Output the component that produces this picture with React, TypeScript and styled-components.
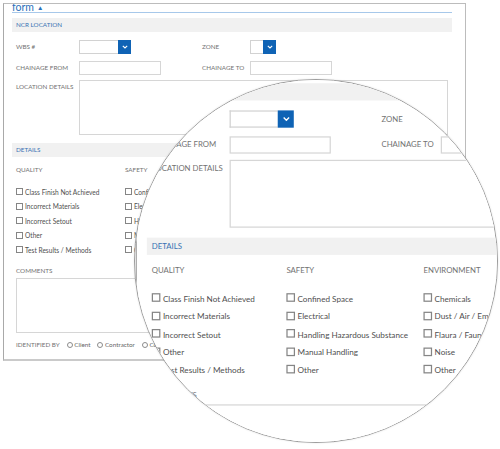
import React from "react";
import styled, { createGlobalStyle } from "styled-components";

const GlobalStyle = createGlobalStyle`
  html, body { margin: 0; padding: 0; background: #fff; }
  body { font-family: Lato, "Open Sans", "Liberation Sans", sans-serif; }
  * { box-sizing: border-box; }
`;

const Stage = styled.div`
  position: relative;
  width: 500px;
  height: 449px;
  overflow: hidden;
  background: #fff;
`;

const Sheet = styled.div`
  width: 500px;
  padding: 3px 0 0 3px;
`;

const Panel = styled.section`
  width: 463px;
  height: 358px;
  border: 1px solid #bcbcbc;
  border-left-color: #a9a9a9;
  border-bottom: 2px solid #cacaca;
  padding: 0 13px 0 8px;
  display: flex;
  flex-direction: column;
  overflow: hidden;
  background: #fff;
`;

const TitleBar = styled.div`
  height: 8.5px;
  overflow: hidden;
  border-bottom: 1.5px solid #a7c8ea;
`;

const Title = styled.div`
  margin-top: -3.5px;
  font-size: 10.5px;
  line-height: 10px;
  color: #2b6fba;
  display: flex;
  align-items: center;
  gap: 3px;
`;

const Caret = styled.span`
  font-size: 6.5px;
  line-height: 10px;
  padding-top: 2px;
  color: #2b6fba;
`;

const Band = styled.div<{ $mt: number }>`
  margin-top: ${(p) => p.$mt}px;
  height: 14.5px;
  background: #f1f1f1;
  padding-left: 4px;
  display: flex;
  align-items: center;
  font-size: 6.3px;
  color: #3871b3;
  text-transform: uppercase;
`;

const FieldRow = styled.div<{ $mt: number; $h: number; $top?: boolean }>`
  margin-top: ${(p) => p.$mt}px;
  height: ${(p) => p.$h}px;
  display: grid;
  grid-template-columns: 67px 123px 48px 1fr;
  align-items: ${(p) => (p.$top ? "start" : "center")};
`;

const Label = styled.span<{ $pt?: number }>`
  padding-left: 4px;
  padding-top: ${(p) => p.$pt ?? 0}px;
  font-size: 6.3px;
  color: #727272;
  text-transform: uppercase;
  white-space: nowrap;
`;

const Label2 = styled(Label)`
  padding-left: 0;
`;

const SelectBox = styled.div<{ $w: number }>`
  display: flex;
  height: 14px;
  width: ${(p) => p.$w + 13}px;
`;

const SelectField = styled.div`
  flex: 1;
  border: 1px solid #d2d2d2;
  border-right: none;
  background: #fff;
`;

const SelectButton = styled.div`
  width: 13px;
  background: #0f63b5;
  display: flex;
  align-items: center;
  justify-content: center;
`;

const TextBox = styled.div<{ $w: number; $h: number }>`
  width: ${(p) => p.$w}px;
  height: ${(p) => p.$h}px;
  border: 1px solid #d6d6d6;
  background: #fff;
`;

const Columns = styled.div`
  display: grid;
  grid-template-columns: 109px 111px 1fr;
  padding-left: 4px;
`;

const Column = styled.div`
  display: flex;
  flex-direction: column;
`;

const ColHeading = styled.div`
  margin-top: 8px;
  height: 10px;
  line-height: 10px;
  font-size: 6.3px;
  color: #727272;
  text-transform: uppercase;
  white-space: nowrap;
`;

const CheckList = styled.div`
  margin-top: 9.8px;
  display: flex;
  flex-direction: column;
`;

const CheckItem = styled.div`
  height: 14.4px;
  display: flex;
  align-items: center;
  gap: 2px;
  font-size: 6.6px;
  color: #4f4f4f;
  white-space: nowrap;
`;

const Box = styled.span`
  width: 7px;
  height: 7px;
  border: 1px solid #858585;
  background: #fff;
  flex: none;
`;

const Comments = styled.div`
  margin-top: 10px;
  padding-left: 4px;
  display: flex;
  flex-direction: column;
`;

const SmallLabel = styled.span`
  height: 8px;
  line-height: 8px;
  font-size: 6.3px;
  color: #727272;
  text-transform: uppercase;
  white-space: nowrap;
`;

const CommentBox = styled.div`
  margin-top: 3px;
  width: 432px;
  height: 55px;
  border: 1px solid #d6d6d6;
  background: #fff;
`;

const RadioRow = styled.div`
  margin-top: 8px;
  height: 8px;
  display: flex;
  align-items: center;
  font-size: 6.3px;
  color: #727272;
  white-space: nowrap;
`;

const RadioOption = styled.span`
  display: flex;
  align-items: center;
  gap: 1.5px;
  margin-left: 7px;
  color: #666;
`;

const RadioDot = styled.span`
  width: 6px;
  height: 6px;
  border-radius: 50%;
  border: 1px solid #8c8c8c;
  background: #fff;
`;

const Lens = styled.div`
  position: absolute;
  left: 134px;
  top: 79px;
  width: 364px;
  height: 364px;
  border-radius: 50%;
  border: 1px solid #9c9c9c;
  overflow: hidden;
  background: #fff;
  box-shadow: 0 0 2px rgba(0, 0, 0, 0.12);
`;

const Magnified = styled.div`
  position: absolute;
  left: 0;
  top: 0;
  transform-origin: 0 0;
  transform: translate(-3px, -19px) scale(1.235);
`;

const Chevron = () => (
  <svg width="6" height="4" viewBox="0 0 6 4">
    <path d="M0.8 0.8 L3 3 L5.2 0.8" fill="none" stroke="#fff" strokeWidth="1.1" />
  </svg>
);

const Select = ({ w }: { w: number }) => (
  <SelectBox $w={w}>
    <SelectField />
    <SelectButton>
      <Chevron />
    </SelectButton>
  </SelectBox>
);

const groups = [
  {
    title: "Quality",
    items: [
      "Class Finish Not Achieved",
      "Incorrect Materials",
      "Incorrect Setout",
      "Other",
      "Test Results / Methods",
    ],
  },
  {
    title: "Safety",
    items: [
      "Confined Space",
      "Electrical",
      "Handling Hazardous Substance",
      "Manual Handling",
      "Other",
    ],
  },
  {
    title: "Environment",
    items: ["Chemicals", "Dust / Air / Emissions", "Flaura / Fauna", "Noise", "Other"],
  },
];

const FormPanel = () => (
  <Sheet>
    <Panel>
      <TitleBar>
        <Title>
          form <Caret>▲</Caret>
        </Title>
      </TitleBar>
      <Band $mt={5}>NCR Location</Band>
      <FieldRow $mt={7.5} $h={14}>
        <Label>WBS #</Label>
        <Select w={39} />
        <Label2>Zone</Label2>
        <Select w={13} />
      </FieldRow>
      <FieldRow $mt={7} $h={14}>
        <Label>Chainage From</Label>
        <TextBox $w={82} $h={14} />
        <Label2>Chainage To</Label2>
        <TextBox $w={82} $h={14} />
      </FieldRow>
      <FieldRow $mt={5} $h={55} $top>
        <Label $pt={3}>Location Details</Label>
        <TextBox $w={369} $h={55} style={{ gridColumn: "2 / 5" }} />
      </FieldRow>
      <Band $mt={8}>Details</Band>
      <Columns>
        {groups.map((g) => (
          <Column key={g.title}>
            <ColHeading>{g.title}</ColHeading>
            <CheckList>
              {g.items.map((it) => (
                <CheckItem key={it}>
                  <Box />
                  {it}
                </CheckItem>
              ))}
            </CheckList>
          </Column>
        ))}
      </Columns>
      <Comments>
        <SmallLabel>Comments</SmallLabel>
        <CommentBox />
        <RadioRow>
          <SmallLabel>Identified By</SmallLabel>
          <RadioOption>
            <RadioDot />
            Client
          </RadioOption>
          <RadioOption>
            <RadioDot />
            Contractor
          </RadioOption>
          <RadioOption>
            <RadioDot />
            Consultant
          </RadioOption>
        </RadioRow>
      </Comments>
    </Panel>
  </Sheet>
);

export default function App() {
  return (
    <>
      <GlobalStyle />
      <Stage>
        <FormPanel />
        <Lens>
          <Magnified>
            <FormPanel />
          </Magnified>
        </Lens>
      </Stage>
    </>
  );
}
